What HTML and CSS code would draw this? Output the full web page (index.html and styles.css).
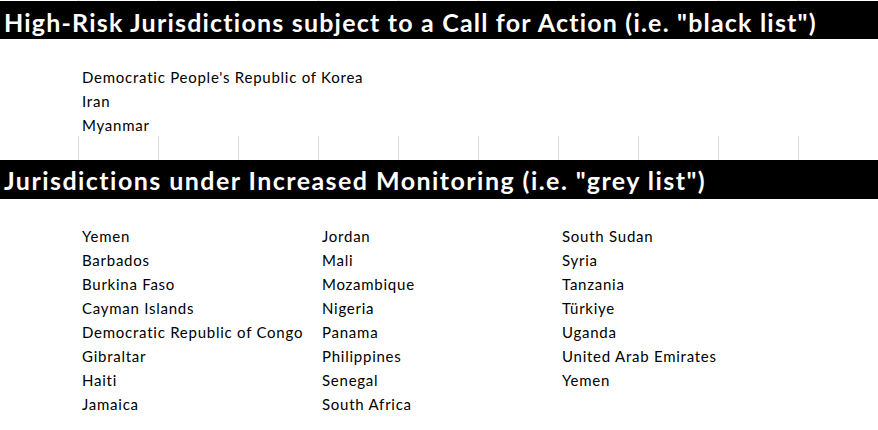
FILE: index.html
```html
<!DOCTYPE html>
<html>
<head>
<meta charset="utf-8">
<link rel="stylesheet" href="styles.css">
</head>
<body>
<div class="sheet">
  <div class="gridrow thin"></div>
  <div class="bar first">High-Risk Jurisdictions subject to a Call for Action (i.e. "black list")</div>
  <div class="spacer"></div>
  <div class="list single">
    <div class="cell">Democratic People's Republic of Korea</div>
    <div class="cell">Iran</div>
    <div class="cell">Myanmar</div>
  </div>
  <div class="gridrow tall"></div>
  <div class="bar second">Jurisdictions under Increased Monitoring (i.e. "grey list")</div>
  <div class="spacer short"></div>
  <div class="list triple">
    <div class="col">
      <div class="cell">Yemen</div>
      <div class="cell">Barbados</div>
      <div class="cell">Burkina Faso</div>
      <div class="cell">Cayman Islands</div>
      <div class="cell">Democratic Republic of Congo</div>
      <div class="cell">Gibraltar</div>
      <div class="cell">Haiti</div>
      <div class="cell">Jamaica</div>
    </div>
    <div class="col">
      <div class="cell">Jordan</div>
      <div class="cell">Mali</div>
      <div class="cell">Mozambique</div>
      <div class="cell">Nigeria</div>
      <div class="cell">Panama</div>
      <div class="cell">Philippines</div>
      <div class="cell">Senegal</div>
      <div class="cell">South Africa</div>
    </div>
    <div class="col">
      <div class="cell">South Sudan</div>
      <div class="cell">Syria</div>
      <div class="cell">Tanzania</div>
      <div class="cell">Türkiye</div>
      <div class="cell">Uganda</div>
      <div class="cell">United Arab Emirates</div>
      <div class="cell">Yemen</div>
    </div>
  </div>
</div>
</body>
</html>
```
FILE: styles.css
```css
html, body {
  margin: 0;
  padding: 0;
  background: #ffffff;
}
.sheet {
  width: 878px;
  height: 430px;
  overflow: hidden;
  font-family: Lato, "Open Sans", sans-serif;
  color: #000000;
}
.gridrow {
  background: repeating-linear-gradient(to right, transparent 0 78px, #dadada 78px 79px, transparent 79px 80px);
}
.gridrow.thin { height: 1px; }
.gridrow.tall { height: 24px; }
.bar {
  background: #000000;
  color: #ffffff;
  font-weight: 700;
  font-size: 25px;
  letter-spacing: 1.2px;
  line-height: 36px;
  padding-left: 4px;
  box-sizing: border-box;
  white-space: nowrap;
}
.bar.first { height: 38px; padding-top: 3px; }
.bar.second { height: 39px; padding-top: 2px; letter-spacing: 1.45px; }
.spacer { height: 25px; }
.spacer.short { height: 24px; }
.list {
  padding-left: 82px;
  font-size: 15px;
  letter-spacing: 0.75px;
}
.list.triple {
  display: grid;
  grid-template-columns: 240px 240px 240px;
}
.cell {
  height: 24px;
  line-height: 24px;
  padding-top: 1px;
  box-sizing: border-box;
  white-space: nowrap;
}
```
